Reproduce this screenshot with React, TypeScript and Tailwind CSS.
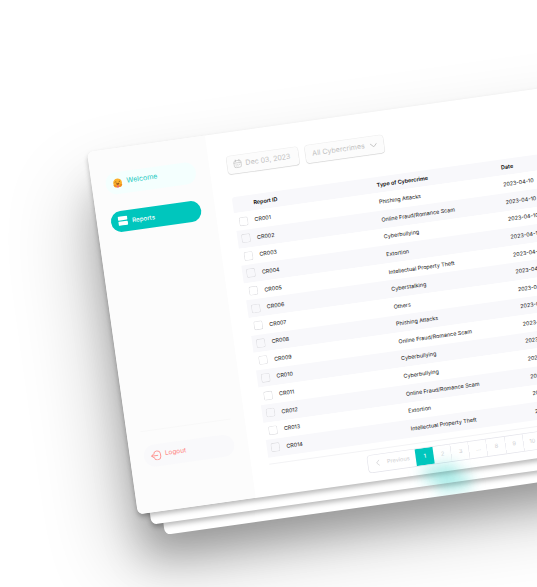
import React from "react";

const crimes = [
  "Phishing Attacks",
  "Online Fraud/Romance Scam",
  "Cyberbullying",
  "Extortion",
  "Intellectual Property Theft",
  "Cyberstalking",
  "Others",
  "Phishing Attacks",
  "Online Fraud/Romance Scam",
  "Cyberbullying",
  "Cyberbullying",
  "Online Fraud/Romance Scam",
  "Extortion",
  "Intellectual Property Theft",
];

const pages = ["2", "3", "...", "8", "9", "10"];

function HugIcon() {
  return (
    <svg viewBox="0 0 20 20" className="h-[10px] w-[10px] shrink-0">
      <circle cx="10" cy="9.500" r="8.800" fill="#fbb02c" />
      <path d="M5 8q1.200-2 2.600 0M12.400 8q1.400-2 2.600 0" stroke="#6b3d14" strokeWidth="1.300" fill="none" />
      <path d="M6.500 10.500h7q-.8 3-3.500 3t-3.500-3" fill="#8a4a1c" />
      <path d="M1 13q3-1.500 5 .5t2 4.500q-5 2-7-5M19 13q-3-1.500-5 .5t-2 4.500q5 2 7-5" fill="#f1901f" />
      <path d="M8 14.500h4v4.500h-4z" fill="#ee6470" />
    </svg>
  );
}

function ReportsIcon() {
  return (
    <svg viewBox="0 0 20 20" className="h-[10px] w-[10px] shrink-0" fill="#fff">
      <rect x=".5" y="1" width="19" height="8" rx="1.500" />
      <rect x=".5" y="11.300" width="19" height="8" rx="1.500" />
    </svg>
  );
}

function LogoutIcon() {
  return (
    <svg viewBox="0 0 20 20" className="h-[10.500px] w-[10.500px] shrink-0" fill="none" stroke="#ff8380" strokeWidth="1.500" strokeLinecap="round" strokeLinejoin="round">
      <path d="M6 6.500Q6.200 1.500 11 1.500h1.500q6 0 6 6v5q0 6-6 6H11q-4.800 0-5-5" />
      <path d="M13 10H1.500M4.500 7l-3 3 3 3" />
    </svg>
  );
}

function CalendarIcon() {
  return (
    <svg viewBox="0 0 20 20" className="h-[9px] w-[9px] shrink-0" fill="none" stroke="#c0c0c0" strokeWidth="1.400" strokeLinecap="round">
      <rect x="2" y="3" width="16" height="15.500" rx="4" />
      <path d="M6 1v4M14 1v4M2 8h16M6 12h.5M10 12h.5M14 12h.5M6 15h.5M10 15h.5" />
    </svg>
  );
}

function Sidebar() {
  return (
    <aside className="flex w-[119.300px] shrink-0 flex-col bg-[#fcfcfc] pr-[14px] pl-[13.700px] pt-[24px]">
      <div className="flex h-[21.500px] items-center gap-[4px] rounded-full bg-[#f4fffe] pl-[7.500px] text-[7.100px] text-[#1bc9c1]">
        <HugIcon />
        <span>Welcome</span>
      </div>
      <div className="mt-[17px] flex h-[21.500px] items-center gap-[4px] rounded-full bg-[#00c6bd] pl-[7.500px] text-[6.200px] font-medium text-white">
        <ReportsIcon />
        <span>Reports</span>
      </div>
      <div className="mt-[200px] h-px bg-[#f8f8f8]" />
      <div className="mt-[14px] flex h-[21.500px] items-center gap-[3.500px] rounded-full bg-[#f9f9fb] pl-[7.500px] text-[6.500px] text-[#ff8380]">
        <LogoutIcon />
        <span>Logout</span>
      </div>
    </aside>
  );
}

function Filters() {
  return (
    <div className="flex gap-[7.500px] whitespace-nowrap text-[7.050px] text-[#c2c2c2]">
      <div className="flex h-[18px] w-[71.600px] items-center gap-[3px] rounded-[3.500px] bg-[#fcfcfc] pl-[6.200px] shadow-[0_0_0_0.500px_rgba(0,0,0,0.070),0_0.800px_0.800px_rgba(0,0,0,0.110)]">
        <CalendarIcon />
        <span>Dec 03, 2023</span>
      </div>
      <div className="flex h-[18px] w-[78.800px] items-center justify-between rounded-[3.500px] bg-[#fcfcfc] pr-[7px] pl-[6.500px] shadow-[0_0_0_0.500px_rgba(0,0,0,0.070),0_0.800px_0.800px_rgba(0,0,0,0.110)]">
        <span>All Cybercrimes</span>
        <svg viewBox="0 0 14 8" className="h-[4.300px] w-[7.500px]" fill="none" stroke="#bdbdbd" strokeWidth="1.500" strokeLinecap="round">
          <path d="M1 1l6 6 6-6" />
        </svg>
      </div>
    </div>
  );
}

function Table() {
  return (
    <div className="mt-[22.800px] text-[5.420px] whitespace-nowrap text-[#111]">
      <div className="flex h-[16.800px] items-center rounded-tl-[3px] bg-[#f8f8fb] pl-[20.500px] font-semibold text-black">
        <span className="w-[124.500px]">Report ID</span>
        <span className="w-[125.600px]">Type of Cybercrime</span>
        <span>Date</span>
      </div>
      {crimes.map((crime, i) => (
        <div key={i} className={`flex h-[17.600px] items-center pl-[3.500px] ${i % 2 ? "bg-[#f8f8fb]" : "bg-white"}`}>
          <span className="mr-[6.700px] h-[9px] w-[9px] shrink-0 rounded-[2px] shadow-[inset_0_0_0_0.600px_#d8d8dc]" />
          <span className="w-[125.700px]">CR{String(i + 1).padStart(3, "0")}</span>
          <span className="w-[125.400px]">{crime}</span>
          <span>2023-04-10</span>
        </div>
      ))}
    </div>
  );
}

function Pagination() {
  return (
    <div className="mt-[6.500px] pl-[97.400px]">
      <div className="-ml-[97.400px] mb-[4.600px] h-px bg-[#f3f3f5]" />
      <div className="flex h-[17.500px] w-max overflow-hidden rounded-[3.500px] bg-white text-[5.600px] text-[#cfcfd2] shadow-[0_0_0_0.600px_#e3e3ea]">
        <div className="flex w-[48.500px] items-center gap-[7px] pl-[8.500px]">
          <svg viewBox="0 0 8 14" className="h-[6.500px] w-[3.800px]" fill="none" stroke="#cfcfd2" strokeWidth="1.500">
            <path d="M7 1L1 7l6 6" />
          </svg>
          <span>Previous</span>
        </div>
        <div className="flex w-[18px] items-center justify-center bg-[#00c6bd] font-medium text-white">1</div>
        {pages.map((p) => (
          <div key={p} className="flex w-[18.100px] items-center justify-center shadow-[inset_-0.600px_0_0_#e3e3ea]">
            {p}
          </div>
        ))}
      </div>
    </div>
  );
}

function TealGlow() {
  return (
    <div className="h-full overflow-hidden rounded-[6px] pt-[346px] pl-[276px]">
      <div className="h-[18px] w-[34px] bg-[#00c6bd]/25 blur-[7px]" />
    </div>
  );
}

export default function App() {
  return (
    <div className="h-[587px] w-[537px] overflow-hidden bg-white pt-[151.800px] pl-[87px] font-['Inter',sans-serif]">
      <div className="grid w-[720px] origin-top-left -rotate-8">
        <div className="col-start-1 row-start-1 mt-[24px] ml-[24px] h-[366px] rounded-[6px] bg-white shadow-[-20px_20px_40px_rgba(0,0,0,0.270),-34px_24px_80px_rgba(0,0,0,0.250)]">
          <TealGlow />
        </div>
        <div className="col-start-1 row-start-1 mt-[12px] ml-[12px] h-[366px] rounded-[6px] bg-white shadow-[0_3px_5px_rgba(0,0,0,0.280)]">
          <TealGlow />
        </div>
        <div className="col-start-1 row-start-1 flex h-[365.500px] overflow-hidden rounded-[6px] bg-white shadow-[0_3px_5px_rgba(0,0,0,0.280)]">
          <Sidebar />
          <main className="flex min-w-0 flex-1 flex-col pt-[23.800px] pl-[18px]">
            <Filters />
            <Table />
            <Pagination />
          </main>
        </div>
      </div>
    </div>
  );
}
